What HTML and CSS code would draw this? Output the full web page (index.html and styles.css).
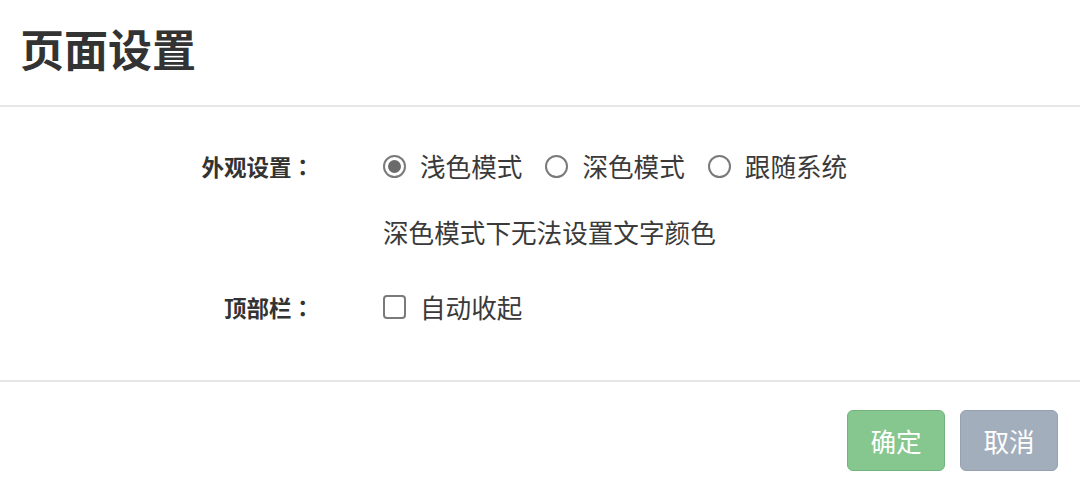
FILE: index.html
```html
<!DOCTYPE html>
<html lang="zh-CN">
<head>
<meta charset="utf-8">
<title>页面设置</title>
<link rel="stylesheet" href="styles.css">
</head>
<body>
<div class="dialog">
  <header class="dialog-header">
    <h1 class="dialog-title">页面设置</h1>
  </header>
  <section class="dialog-body">
    <div class="form-row">
      <div class="form-label">外观设置<span class="colon" lang="zh-TW">：</span></div>
      <div class="form-field">
        <div class="option-line">
          <label class="option"><span class="radio checked"></span><span class="option-text">浅色模式</span></label>
          <label class="option"><span class="radio"></span><span class="option-text">深色模式</span></label>
          <label class="option"><span class="radio"></span><span class="option-text">跟随系统</span></label>
        </div>
        <div class="hint">深色模式下无法设置文字颜色</div>
      </div>
    </div>
    <div class="form-row">
      <div class="form-label">顶部栏<span class="colon" lang="zh-TW">：</span></div>
      <div class="form-field">
        <div class="option-line">
          <label class="option"><span class="checkbox"></span><span class="option-text">自动收起</span></label>
        </div>
      </div>
    </div>
  </section>
  <footer class="dialog-footer">
    <button class="btn btn-ok" type="button">确定</button>
    <button class="btn btn-cancel" type="button">取消</button>
  </footer>
</div>
</body>
</html>
```

FILE: styles.css
```css
* {
  box-sizing: border-box;
}

html, body {
  margin: 0;
  padding: 0;
  background: #ffffff;
}

body {
  font-family: "Noto Sans CJK SC", "Noto Sans", sans-serif;
  color: #333333;
}

.dialog {
  width: 1080px;
  height: 491px;
  display: flex;
  flex-direction: column;
}

.dialog-header {
  height: 107px;
  padding: 17px 20px 0;
  border-bottom: 2px solid #e6e6e6;
}

.dialog-title {
  margin: 0;
  font-size: 44px;
  line-height: 62px;
  font-weight: 700;
  color: #333333;
}

.dialog-body {
  height: 275px;
  padding-top: 39px;
  border-bottom: 2px solid #e6e6e6;
  display: flex;
  flex-direction: column;
  gap: 35px;
}

.form-row {
  display: grid;
  grid-template-columns: 314px 1fr;
  column-gap: 69px;
}

.form-label {
  text-align: right;
  font-size: 22.5px;
  line-height: 40px;
  font-weight: 700;
  color: #333333;
}

.colon {
  font-family: "Noto Sans CJK TC", "Noto Sans CJK JP", sans-serif;
}

.form-field {
  display: flex;
  flex-direction: column;
}

.option-line {
  display: flex;
  align-items: center;
  height: 40px;
  gap: 23px;
}

.option {
  display: flex;
  align-items: center;
  gap: 14px;
}

.option-text {
  font-size: 25.6px;
  line-height: 40px;
  color: #3a3a3a;
}

.radio {
  width: 23px;
  height: 23px;
  border: 2px solid #7a7a7a;
  border-radius: 50%;
  display: flex;
  align-items: center;
  justify-content: center;
}

.radio.checked::after {
  content: "";
  width: 13px;
  height: 13px;
  border-radius: 50%;
  background: #6b6b6b;
}

.checkbox {
  width: 23px;
  height: 24px;
  border: 2px solid #7a7a7a;
  border-radius: 4px;
}

.hint {
  margin-top: 26px;
  font-size: 25.6px;
  line-height: 40px;
  color: #3a3a3a;
}

.dialog-footer {
  flex: 1;
  display: flex;
  justify-content: flex-end;
  align-items: flex-start;
  gap: 15px;
  padding: 28px 22px 0 0;
}

.btn {
  width: 98px;
  height: 61px;
  border-radius: 6px;
  font-family: "Noto Sans CJK SC", "Noto Sans", sans-serif;
  font-size: 25.6px;
  color: #ffffff;
  padding: 0;
  cursor: pointer;
}

.btn-ok {
  background: #86c78f;
  border: 1px solid #72b37b;
}

.btn-cancel {
  background: #a3aebc;
  border: 1px solid #96a1af;
}
```
